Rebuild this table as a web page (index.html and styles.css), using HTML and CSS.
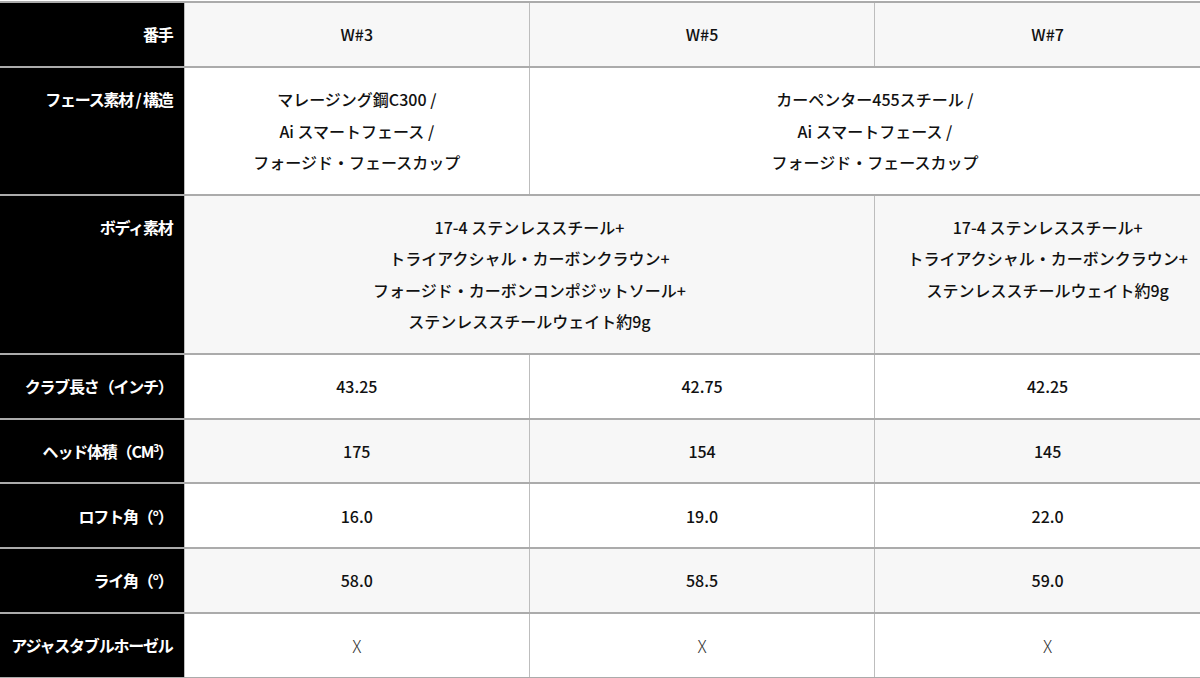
FILE: index.html
```html
<!DOCTYPE html>
<html lang="ja">
<head>
<meta charset="utf-8">
<link rel="stylesheet" href="styles.css">
</head>
<body>
<table class="spec">
  <colgroup>
    <col class="c-label">
    <col class="c-data">
    <col class="c-data">
    <col class="c-data">
  </colgroup>
  <tbody>
    <tr class="alt">
      <th>番手</th>
      <td>W#3</td>
      <td>W#5</td>
      <td>W#7</td>
    </tr>
    <tr>
      <th>フェース素材 / 構造</th>
      <td>マレージング鋼C300 /<br>Ai スマートフェース /<br>フォージド・フェースカップ</td>
      <td colspan="2">カーペンター455スチール /<br>Ai スマートフェース /<br>フォージド・フェースカップ</td>
    </tr>
    <tr class="alt">
      <th>ボディ素材</th>
      <td colspan="2">17-4 ステンレススチール+<br>トライアクシャル・カーボンクラウン+<br>フォージド・カーボンコンポジットソール+<br>ステンレススチールウェイト約9g</td>
      <td>17-4 ステンレススチール+<br>トライアクシャル・カーボンクラウン+<br>ステンレススチールウェイト約9g</td>
    </tr>
    <tr>
      <th>クラブ長さ（インチ）</th>
      <td>43.25</td>
      <td>42.75</td>
      <td>42.25</td>
    </tr>
    <tr class="alt">
      <th>ヘッド体積（CM<sup>3</sup>）</th>
      <td>175</td>
      <td>154</td>
      <td>145</td>
    </tr>
    <tr>
      <th>ロフト角（°）</th>
      <td>16.0</td>
      <td>19.0</td>
      <td>22.0</td>
    </tr>
    <tr class="alt">
      <th>ライ角（°）</th>
      <td>58.0</td>
      <td>58.5</td>
      <td>59.0</td>
    </tr>
    <tr>
      <th>アジャスタブルホーゼル</th>
      <td class="mark">X</td>
      <td class="mark">X</td>
      <td class="mark">X</td>
    </tr>
  </tbody>
</table>
</body>
</html>
```

FILE: styles.css
```css
html, body {
  margin: 0;
  padding: 0;
  background: #ffffff;
  overflow: hidden;
}

body {
  padding-top: 1px;
  font-family: "Noto Sans CJK JP", "Noto Sans", sans-serif;
  font-size: 16px;
  color: #111111;
}

.spec {
  border-collapse: collapse;
  table-layout: fixed;
  width: 1220px;
  border-top: 2px solid #ababab;
}

.c-label {
  width: 184px;
}

.c-data {
  width: 345px;
}

.spec th,
.spec td {
  vertical-align: top;
  padding: 16.25px 0 15px;
  line-height: 31.5px;
  border-bottom: 2px solid #ababab;
  border-left: 1px solid #bdbdbd;
}

.spec th {
  background: #000000;
  color: #ffffff;
  font-weight: 700;
  text-align: right;
  padding-right: 11px;
  border-left: none;
  letter-spacing: -1.2px;
  white-space: nowrap;
}

.spec td {
  text-align: center;
  background: #ffffff;
  font-weight: 500;
}

.spec tr.alt td {
  background: #f7f7f7;
}

.spec sup {
  font-size: 10px;
  line-height: 0;
  vertical-align: 6px;
}

.spec td.mark {
  font-weight: 300;
  font-size: 17px;
  color: #333333;
}
```
